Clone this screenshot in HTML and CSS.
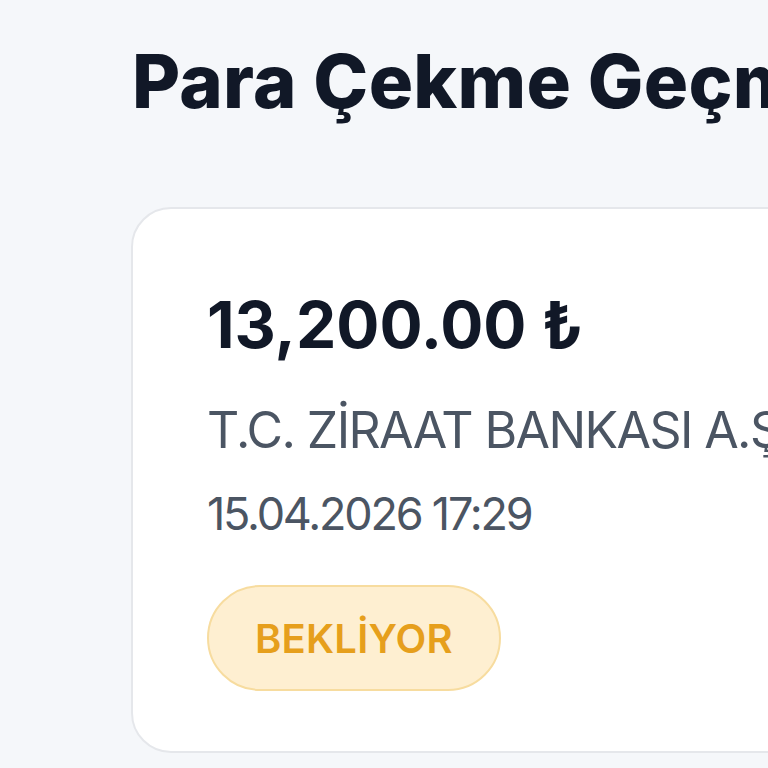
FILE: index.html
```html
<!DOCTYPE html>
<html lang="tr">
<head>
<meta charset="utf-8">
<title>Para Çekme Geçmişi</title>
<link rel="stylesheet" href="styles.css">
</head>
<body>
<main class="page">
  <h1 class="title">Para Çekme Geçmişi</h1>
  <section class="card">
    <div class="amount">13,200.00 ₺</div>
    <div class="bank">T.C. ZİRAAT BANKASI A.Ş.</div>
    <div class="date">15.04.2026 17:29</div>
    <span class="badge">BEKLİYOR</span>
  </section>
</main>
</body>
</html>
```
FILE: styles.css
```css
html, body {
  margin: 0;
  padding: 0;
  background: #f5f7fa;
  overflow: hidden;
}
body {
  font-family: "Inter", "Open Sans", sans-serif;
  color: #111827;
}
.page {
  padding: 38px 0 0 132px;
  width: 1200px;
}
.title {
  margin: 0;
  font-size: 74px;
  font-weight: 800;
  line-height: 86px;
  color: #111827;
  letter-spacing: 0.3px;
  white-space: nowrap;
}
.card {
  margin-top: 83px;
  margin-left: -1px;
  width: 900px;
  box-sizing: border-box;
  background: #ffffff;
  border: 2px solid #e5e7eb;
  border-radius: 40px;
  padding: 78px 0 60px 74px;
  display: flex;
  flex-direction: column;
  align-items: flex-start;
}
.amount {
  font-size: 64px;
  font-weight: 700;
  line-height: 76px;
  color: #111827;
}
.bank {
  margin-top: 37px;
  font-size: 50px;
  font-weight: 400;
  line-height: 60px;
  color: #4b5563;
  letter-spacing: -1.6px;
  white-space: nowrap;
}
.date {
  margin-top: 27px;
  font-size: 45px;
  font-weight: 400;
  line-height: 54px;
  color: #4b5563;
  letter-spacing: -2.2px;
}
.badge {
  margin-top: 44px;
  display: inline-flex;
  align-items: center;
  justify-content: center;
  height: 106px;
  padding: 0 46px;
  box-sizing: border-box;
  border: 2px solid #f7dc9f;
  background: #feefd1;
  border-radius: 53px;
  font-size: 40px;
  font-weight: 600;
  letter-spacing: 0.2px;
  color: #e69f1c;
}
```
